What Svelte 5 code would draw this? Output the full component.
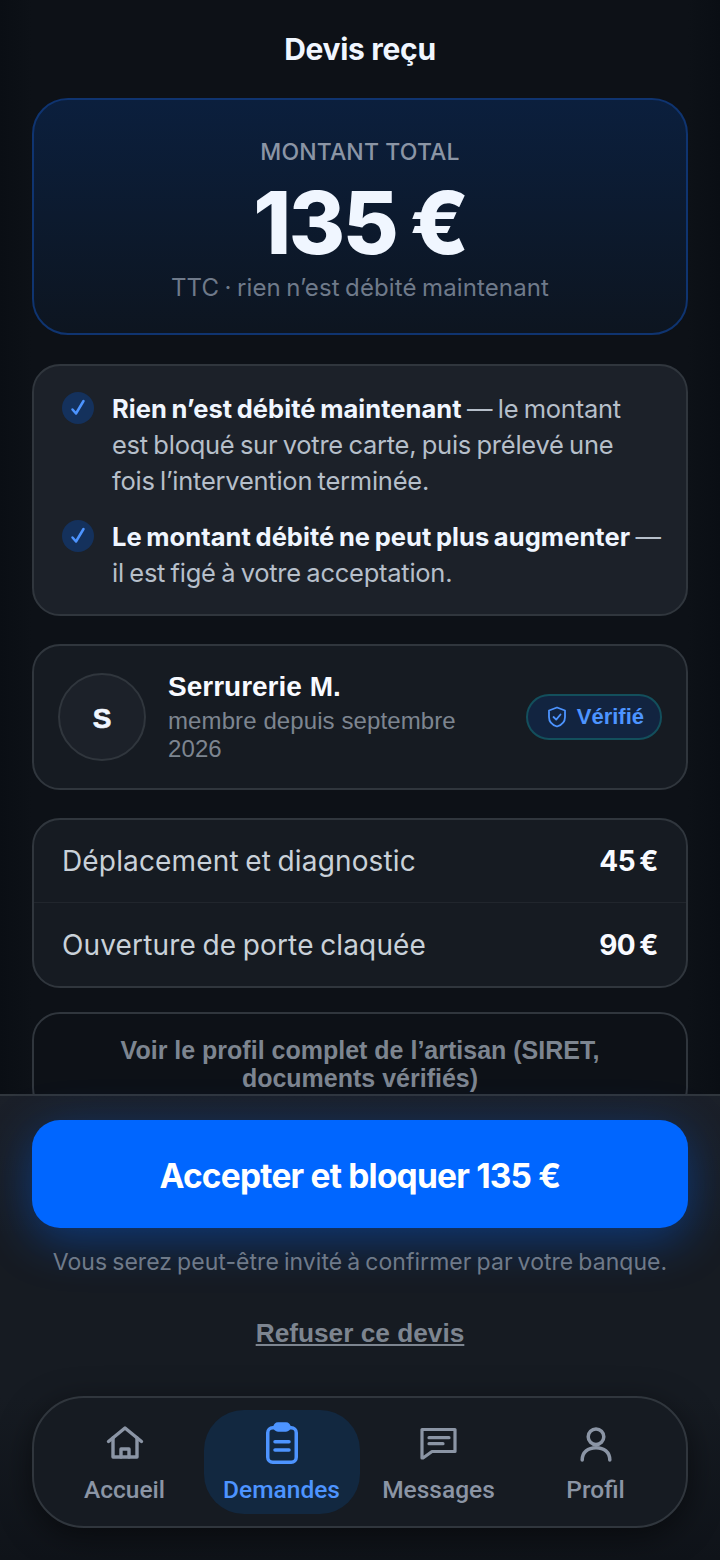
<script>
  // the newlines keep the reference's wrap, Inter runs a little narrower than the original face
  const checks = [
    { strong: 'Rien n’est débité maintenant', rest: ' — le montant\nest bloqué sur votre carte, puis prélevé une\nfois l’intervention terminée.' },
    { strong: 'Le montant débité ne peut plus augmenter', rest: ' — il est figé à votre acceptation.' }
  ]
  const lines = [
    { label: 'Déplacement et diagnostic', price: '45 €' },
    { label: 'Ouverture de porte claquée', price: '90 €' }
  ]
</script>

<div class="page">
  <main>
    <h1>Devis reçu</h1>

    <section class="hero">
      <div class="hero-label">MONTANT TOTAL</div>
      <div class="hero-amount">135 €</div>
      <div class="hero-sub">TTC · rien n’est débité maintenant</div>
    </section>

    <section class="checks">
      {#each checks as c}
        <div class="check">
          <span class="tick">
            <svg width="20" height="20" viewBox="0 0 20 20" fill="none" stroke="#4d94ff" stroke-width="2.500" stroke-linecap="round" stroke-linejoin="round"><path d="M4.500 11.500 8 15.500 15.500 3" /></svg>
          </span>
          <p><strong>{c.strong}</strong>{c.rest}</p>
        </div>
      {/each}
    </section>

    <section class="artisan">
      <div class="avatar">S</div>
      <div class="who">
        <div class="name">Serrurerie M.</div>
        <div class="since">membre depuis septembre 2026</div>
      </div>
      <div class="badge">
        <svg width="20" height="24" viewBox="0 0 20 24" fill="none" stroke="#4d94ff" stroke-width="1.800" stroke-linecap="round" stroke-linejoin="round">
          <path d="M10 2.500 18 5.500V12c0 4.800-3.200 8-8 9.500C5.200 20 2 16.800 2 12V5.500Z" />
          <path d="M6.500 12 9.200 14.600 13.500 9.500" />
        </svg>
        <span>Vérifié</span>
      </div>
    </section>

    <section class="lines">
      {#each lines as l}
        <div class="line">
          <span>{l.label}</span>
          <strong>{l.price}</strong>
        </div>
      {/each}
    </section>

    <button class="profile">Voir le profil complet de l’artisan (SIRET, documents vérifiés)</button>
  </main>

  <footer>
    <div class="actions">
      <button class="accept">Accepter et bloquer 135 €</button>
      <p class="bank">Vous serez peut-être invité à confirmer par votre banque.</p>
      <button class="refuse">Refuser ce devis</button>
    </div>

    <nav>
      <div class="tab">
        <svg width="40" height="48" viewBox="0 0 40 48" fill="none" stroke="currentColor" stroke-width="3.400" stroke-linejoin="round" stroke-linecap="round">
          <path d="M3.500 23.500 20 10 36.500 23.500" />
          <path d="M8 20V39H32V20" />
          <path d="M16 39V31H24V39" />
        </svg>
        <span>Accueil</span>
      </div>
      <div class="tab active">
        <svg width="40" height="48" viewBox="0 0 40 48" fill="none" stroke="currentColor" stroke-width="3.500" stroke-linecap="round" stroke-linejoin="round">
          <rect x="5.750" y="9.750" width="28.500" height="34.500" rx="5" />
          <rect x="13" y="6" width="14" height="6" rx="3" fill="currentColor" />
          <path d="M13 23.700H27M13 32H27" />
        </svg>
        <span>Demandes</span>
      </div>
      <div class="tab">
        <svg width="40" height="48" viewBox="0 0 40 48" fill="none" stroke="currentColor" stroke-width="3.200" stroke-linecap="round" stroke-linejoin="round">
          <path d="M3 11.500H36V33.500H13L4 40H3Z" />
          <path d="M10 19.700H30M10 25.700H24" />
        </svg>
        <span>Messages</span>
      </div>
      <div class="tab">
        <svg width="40" height="48" viewBox="0 0 40 48" fill="none" stroke="currentColor" stroke-width="3.500" stroke-linecap="round">
          <circle cx="20" cy="18.700" r="7.800" />
          <path d="M6.200 42C6.200 34 12 29.700 20 29.700S33.800 34 33.800 42" />
        </svg>
        <span>Profil</span>
      </div>
    </nav>
  </footer>
</div>

<style>
  :global(body) {
    margin: 0;
    background: #0d1117;
  }
  .page {
    position: relative;
    width: 720px;
    height: 1560px;
    overflow: hidden;
    background: linear-gradient(90deg, #0a0e14 0, #0d1117 32px, #0d1117 688px, #0a0e14 100%);
    font-family: Inter, "Open Sans", sans-serif;
    color: #f0f6ff;
  }
  main {
    padding: 0 32px;
    display: flex;
    flex-direction: column;
  }
  h1 {
    margin: 0;
    height: 98px;
    line-height: 98px;
    text-align: center;
    font-size: 30px;
    font-weight: 700;
    letter-spacing: -0.3px;
  }
  .hero {
    box-sizing: border-box;
    height: 237px;
    border: 2px solid #0f3470;
    border-radius: 36px;
    background: linear-gradient(180deg, #0b1f3d 0%, #0d1520 100%);
    display: flex;
    flex-direction: column;
    align-items: center;
  }
  .hero-label {
    margin-top: 37px;
    font-size: 23px;
    line-height: 30px;
    font-weight: 500;
    color: #8b95a5;
    letter-spacing: 0.15px;
  }
  .hero-amount {
    margin-top: 10px;
    font-size: 86px;
    line-height: 92px;
    font-weight: 800;
    letter-spacing: -2.500px;
    word-spacing: -3px;
  }
  .hero-sub {
    margin-top: 3px;
    font-size: 24px;
    line-height: 32px;
    color: #6f7a8a;
    letter-spacing: 0.12px;
    word-spacing: -1.500px;
  }
  .checks {
    box-sizing: border-box;
    margin-top: 29px;
    height: 252px;
    padding: 25px 24px 0 28px;
    border: 2px solid #30363d;
    border-radius: 28px;
    background: #1c2129;
    display: flex;
    flex-direction: column;
    gap: 20px;
  }
  .check {
    display: flex;
    gap: 18px;
  }
  .tick {
    flex: none;
    width: 32px;
    height: 32px;
    margin-top: 1px;
    border-radius: 50%;
    background: #14315c;
    display: flex;
    align-items: center;
    justify-content: center;
  }
  .check p {
    margin: 0;
    font-size: 25.500px;
    line-height: 36px;
    color: #b6bfca;
    letter-spacing: -0.25px;
    word-spacing: -1.500px;
    white-space: pre-line;
  }
  .check strong {
    color: #f0f6ff;
    font-weight: 700;
    letter-spacing: 0.05px;
  }
  .artisan {
    box-sizing: border-box;
    margin-top: 28px;
    height: 146px;
    padding: 0 24px;
    border: 2px solid #30363d;
    border-radius: 28px;
    background: #161b22;
    display: flex;
    align-items: center;
  }
  .avatar {
    box-sizing: border-box;
    flex: none;
    width: 88px;
    height: 88px;
    padding-top: 3px;
    border: 2px solid #30363d;
    border-radius: 50%;
    background: #1c2129;
    display: flex;
    align-items: center;
    justify-content: center;
    font-family: "Liberation Sans", Arial, sans-serif;
    font-weight: 700;
    font-size: 28px;
    -webkit-text-stroke: 0.6px #f0f6ff;
  }
  .who {
    margin-left: 22px;
    width: 312px;
    font-family: "Liberation Sans", Arial, sans-serif;
  }
  .name {
    font-size: 28px;
    line-height: 32px;
    font-weight: 700;
    color: #f8faff;
  }
  .since {
    margin-top: 4px;
    font-size: 24px;
    line-height: 28px;
    letter-spacing: 0.1px;
    color: #7d8590;
  }
  .badge {
    box-sizing: border-box;
    flex: none;
    margin-left: auto;
    height: 46px;
    padding: 0 16px 0 19px;
    border: 2px solid #134f5c;
    border-radius: 23px;
    background: #122440;
    display: flex;
    align-items: center;
    gap: 10px;
    font-family: "Liberation Sans", Arial, sans-serif;
    font-size: 22px;
    font-weight: 700;
    color: #4d94ff;
  }
  .lines {
    box-sizing: border-box;
    margin-top: 28px;
    height: 170px;
    border: 2px solid #30363d;
    border-radius: 28px;
    background: #161b22;
    display: flex;
    flex-direction: column;
  }
  .line {
    flex: 1;
    padding: 0 28px;
    display: flex;
    align-items: center;
    justify-content: space-between;
    font-size: 28px;
    color: #c9d1d9;
    letter-spacing: 0.15px;
    word-spacing: -1.500px;
  }
  .line + .line {
    border-top: 1px solid #21262d;
    padding-top: 1px;
  }
  .line strong {
    font-size: 28px;
    font-weight: 700;
    color: #f8faff;
    letter-spacing: -0.5px;
    word-spacing: -2px;
  }
  .profile {
    box-sizing: border-box;
    margin-top: 24px;
    width: 100%;
    padding: 22px 40px;
    border: 2px solid #30363d;
    border-radius: 28px;
    background: transparent;
    font-family: "Liberation Sans", Arial, sans-serif;
    font-size: 25px;
    line-height: 28px;
    font-weight: 700;
    color: #7d8590;
    text-align: center;
  }
  footer {
    position: absolute;
    left: 0;
    right: 0;
    top: 1094px;
    bottom: 0;
    box-sizing: border-box;
    border-top: 2px solid #30363d;
    background: linear-gradient(180deg, #1b2029 0%, #161b22 30%, #161b22 65%, #0f1319 100%);
  }
  .actions {
    padding: 24px 32px 0;
    display: flex;
    flex-direction: column;
    align-items: center;
  }
  .accept {
    width: 100%;
    height: 108px;
    padding: 3px 0 0;
    border: 0;
    border-radius: 28px;
    background: #0066ff;
    box-shadow: 0 12px 48px rgba(0, 102, 255, 0.4);
    color: #fff;
    font-family: Inter, sans-serif;
    font-size: 33.500px;
    font-weight: 700;
    letter-spacing: -0.8px;
  }
  .bank {
    margin: 18px 0 0;
    font-size: 23px;
    line-height: 32px;
    color: #6f7a8a;
    letter-spacing: 0.05px;
    word-spacing: -1.500px;
    white-space: nowrap;
  }
  .refuse {
    margin-top: 40px;
    padding: 0;
    border: 0;
    background: none;
    font-family: "Liberation Sans", Arial, sans-serif;
    font-size: 26.250px;
    line-height: 30px;
    font-weight: 700;
    color: #7d8590;
    text-decoration: underline;
  }
  nav {
    box-sizing: border-box;
    margin: 48px 32px 0;
    height: 132px;
    padding: 0 14px;
    border: 2px solid #30363d;
    border-radius: 52px;
    background: #161b22;
    box-shadow: 0 8px 32px rgba(0, 0, 0, 0.5);
    display: grid;
    grid-template-columns: repeat(4, 156px);
    justify-content: center;
    align-items: center;
    gap: 1px;
  }
  .tab {
    box-sizing: border-box;
    height: 104px;
    padding-top: 8px;
    border-radius: 40px;
    display: flex;
    flex-direction: column;
    align-items: center;
    gap: 9px;
    color: #8b95a5;
    font-family: Roboto, Inter, sans-serif;
    font-size: 24.500px;
    line-height: 30px;
    font-weight: 500;
  }
  .active {
    background: #122840;
    color: #4d94ff;
  }
</style>
